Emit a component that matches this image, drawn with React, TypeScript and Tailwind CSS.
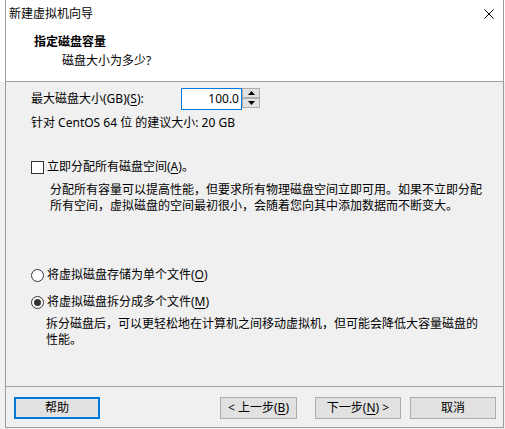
import React from "react";

const U = ({ c }: { c: string }) => <span className="underline underline-offset-2">{c}</span>;

function Btn({ children, w, focus }: { children: React.ReactNode; w: string; focus?: boolean }) {
  return (
    <div
      className={
        "h-[22px] flex items-center justify-center bg-[#e1e1e1] " +
        w +
        (focus ? " border-2 border-[#0078d7]" : " border border-[#adadad]")
      }
    >
      {children}
    </div>
  );
}

function Radio({ checked }: { checked?: boolean }) {
  return (
    <div className="w-[13px] h-[13px] rounded-full border border-[#333333] bg-white flex items-center justify-center shrink-0">
      {checked && <div className="w-[7px] h-[7px] rounded-full bg-[#333333]" />}
    </div>
  );
}

export default function App() {
  return (
    <div
      className="w-[505px] h-[429px] bg-[linear-gradient(to_bottom,#ffffff_82px,#f0f0f0_82px)] text-[12px] leading-[16px] text-black"
      style={{ fontFamily: '"Noto Sans", "Noto Sans CJK SC", sans-serif' }}
    >
      <div className="ml-[5px] w-[499px] h-[428px] border-x border-b border-[#9b9b9b] flex flex-col">
        {/* title bar */}
        <div className="h-[27px] bg-white flex items-center justify-between pl-[3px] pr-[9px] shrink-0">
          <span>新建虚拟机向导</span>
          <svg width="10" height="10" viewBox="0 0 10 10">
            <path d="M0.5 0.5 L9.5 9.5 M9.5 0.5 L0.5 9.5" stroke="#000" strokeWidth="1" />
          </svg>
        </div>
        {/* header */}
        <div className="h-[55px] bg-white border-b border-[#a0a0a0] shrink-0 pt-[7px]">
          <div className="pl-[28px] font-bold">指定磁盘容量</div>
          <div className="pl-[56px] mt-[3px]">磁盘大小为多少?</div>
        </div>
        {/* body */}
        <div className="flex-1 bg-[#f0f0f0] pl-[25px]">
          <div className="mt-[6px] h-[22px] flex items-center">
            <div className="w-[150px] shrink-0">
              最大磁盘大小(GB)(<U c="S" />):
            </div>
            <div className="w-[61px] h-[22px] border border-[#0078d7] bg-white flex items-center justify-end pr-[2px]">
              100.0
            </div>
            <div className="w-[18px] h-[20px] self-start flex flex-col">
              <div className="h-[10px] border border-[#adadad] bg-[#e1e1e1] flex items-center justify-center">
                <svg width="7" height="4" viewBox="0 0 7 4">
                  <path d="M3.5 0 L7 4 L0 4 Z" fill="#000" />
                </svg>
              </div>
              <div className="h-[10px] border border-[#adadad] bg-[#e1e1e1] flex items-center justify-center">
                <svg width="7" height="4" viewBox="0 0 7 4">
                  <path d="M0 0 L7 0 L3.5 4 Z" fill="#000" />
                </svg>
              </div>
            </div>
          </div>
          <div className="mt-[5px]">针对 CentOS 64 位 的建议大小: 20 GB</div>

          <div className="mt-[28px] flex items-center">
            <div className="w-[13px] h-[13px] border border-[#333333] bg-white shrink-0" />
            <span className="ml-[3px]">
              立即分配所有磁盘空间(<U c="A" />)。
            </span>
          </div>
          <div className="mt-[7px] ml-[19px] whitespace-nowrap">
            分配所有容量可以提高性能，但要求所有物理磁盘空间立即可用。如果不立即分配
            <br />
            所有空间，虚拟磁盘的空间最初很小，会随着您向其中添加数据而不断变大。
          </div>

          <div className="mt-[53px] flex items-center">
            <Radio />
            <span className="ml-[3px]">
              将虚拟磁盘存储为单个文件(<U c="O" />)
            </span>
          </div>
          <div className="mt-[11px] flex items-center">
            <Radio checked />
            <span className="ml-[3px]">
              将虚拟磁盘拆分成多个文件(<U c="M" />)
            </span>
          </div>
          <div className="mt-[6px] ml-[15px] whitespace-nowrap">
            拆分磁盘后，可以更轻松地在计算机之间移动虚拟机，但可能会降低大容量磁盘的
            <br />
            性能。
          </div>
        </div>
        {/* footer */}
        <div className="h-[41px] shrink-0 bg-[#f0f0f0] border-t border-[#a0a0a0] pt-[10px] pl-[8px] pr-[7px] flex items-start">
          <Btn w="w-[86px]" focus>
            帮助
          </Btn>
          <div className="ml-auto flex">
            <Btn w="w-[77px]">
              &lt; 上一步(<U c="B" />)
            </Btn>
            <div className="ml-[18px]">
              <Btn w="w-[86px]">
                下一步(<U c="N" />) &gt;
              </Btn>
            </div>
            <div className="ml-[9px]">
              <Btn w="w-[86px]">取消</Btn>
            </div>
          </div>
        </div>
      </div>
    </div>
  );
}
